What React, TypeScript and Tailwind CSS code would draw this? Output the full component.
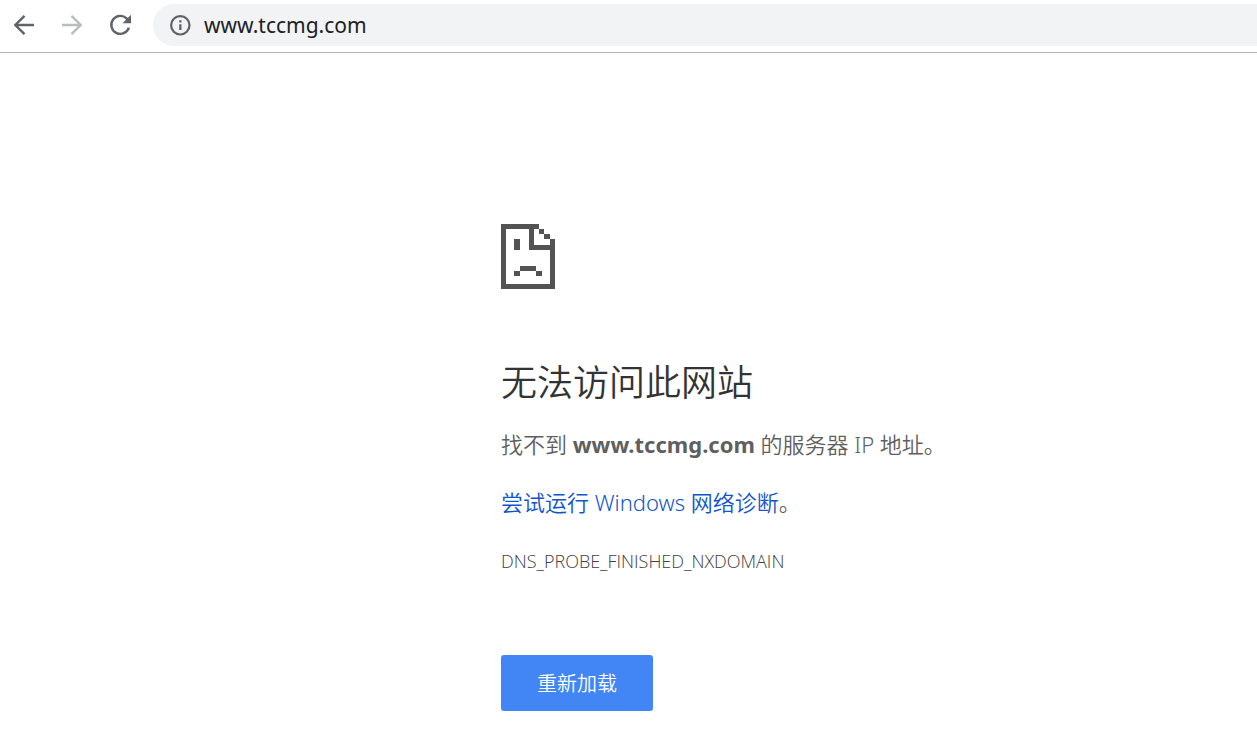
import React from "react";

function BackIcon() {
  return (
    <svg viewBox="0 0 24 24" className="size-6" fill="none" stroke="currentColor" strokeWidth="2.4" aria-hidden="true">
      <path d="M22 12H4M12.5 2.8 3.3 12l9.2 9.2" />
    </svg>
  );
}

function ForwardIcon() {
  return (
    <svg viewBox="0 0 24 24" className="size-6" fill="none" stroke="currentColor" strokeWidth="2.4" aria-hidden="true">
      <path d="M2 12h18M11.5 2.8l9.2 9.2-9.2 9.2" />
    </svg>
  );
}

function ReloadIcon() {
  return (
    <svg viewBox="0 0 24 24" className="size-6" fill="none" aria-hidden="true">
      <path d="M20.9 14.6A9 9 0 1 1 18.8 5.6L20.4 7.2" stroke="currentColor" strokeWidth="2.4" />
      <path d="M23 1.8v8.4h-8.4z" fill="currentColor" />
    </svg>
  );
}

function InfoIcon() {
  return (
    <svg viewBox="0 0 22 22" className="size-[22px]" fill="none" aria-hidden="true">
      <circle cx="11.3" cy="11.3" r="9.2" stroke="currentColor" strokeWidth="2.2" />
      <path d="M10.2 10.2h2.3v5.8h-2.3zM10.2 6.3h2.3v2.2h-2.3z" fill="currentColor" />
    </svg>
  );
}

function SadPageIcon() {
  return (
    <svg viewBox="0 0 54 65" className="h-[65px] w-[54px]" fill="#535353" shapeRendering="crispEdges" aria-hidden="true">
      <path d="M0 0h38v5H33v16h16v-6h5v50H0zM5 5v55h44V26H28V5z" fillRule="evenodd" />
      <path d="M38 5h5v5h-5zM43 10h6v5h-6zM13 15h6v11h-6zM19 42h16v5H19zM13 47h6v5h-6zM35 47h6v5h-6z" />
    </svg>
  );
}

export default function App() {
  return (
    <div className="min-h-screen overflow-x-hidden bg-white font-['Noto_Sans','Noto_Sans_CJK_SC',sans-serif]">
      <header className="flex h-[53px] items-start border-b border-[#b3b3b3] pt-1 pl-3">
        <div className="flex h-[42px] items-center gap-6 text-[#5f6368]">
          <button type="button" aria-label="后退"><BackIcon /></button>
          <button type="button" aria-label="前进" disabled className="text-[#bbbcbe]"><ForwardIcon /></button>
          <button type="button" aria-label="重新加载此页"><ReloadIcon /></button>
        </div>
        <div className="ml-[21px] flex h-[42px] flex-1 items-center gap-[13px] rounded-l-full bg-[#f1f3f4] pl-4 text-[#5f6368]">
          <InfoIcon />
          <input
            type="text"
            aria-label="地址"
            defaultValue="www.tccmg.com"
            className="min-w-0 flex-1 bg-transparent text-[21px] leading-7 text-[#202124] outline-none"
          />
        </div>
      </header>
      <main className="pt-[171px] pr-6 pb-6 pl-[501px] font-[350] text-[#5f5f5f]">
        <SadPageIcon />
        <h1 className="mt-[67px] text-[36px] leading-[54px] font-[350] text-[#333333]">无法访问此网站</h1>
        <p className="mt-[17px] text-[22px] leading-[34px]">
          找不到 <strong className="font-bold">www.tccmg.com</strong> 的服务器 IP 地址。
        </p>
        <p className="mt-6 text-[22px] leading-[34px]">
          <a href="#diagnose" className="text-[#1155cc]">尝试运行 Windows 网络诊断</a>。
        </p>
        <p className="mt-[25px] font-['Open_Sans',sans-serif] text-[18px] leading-[34px] font-light text-[#404040]">DNS_PROBE_FINISHED_NXDOMAIN</p>
        <button type="button" className="mt-[77px] h-14 rounded-[3px] bg-[#4285f4] px-9 pt-0.5 text-[20px] leading-7 text-white">
          重新加载
        </button>
      </main>
    </div>
  );
}
